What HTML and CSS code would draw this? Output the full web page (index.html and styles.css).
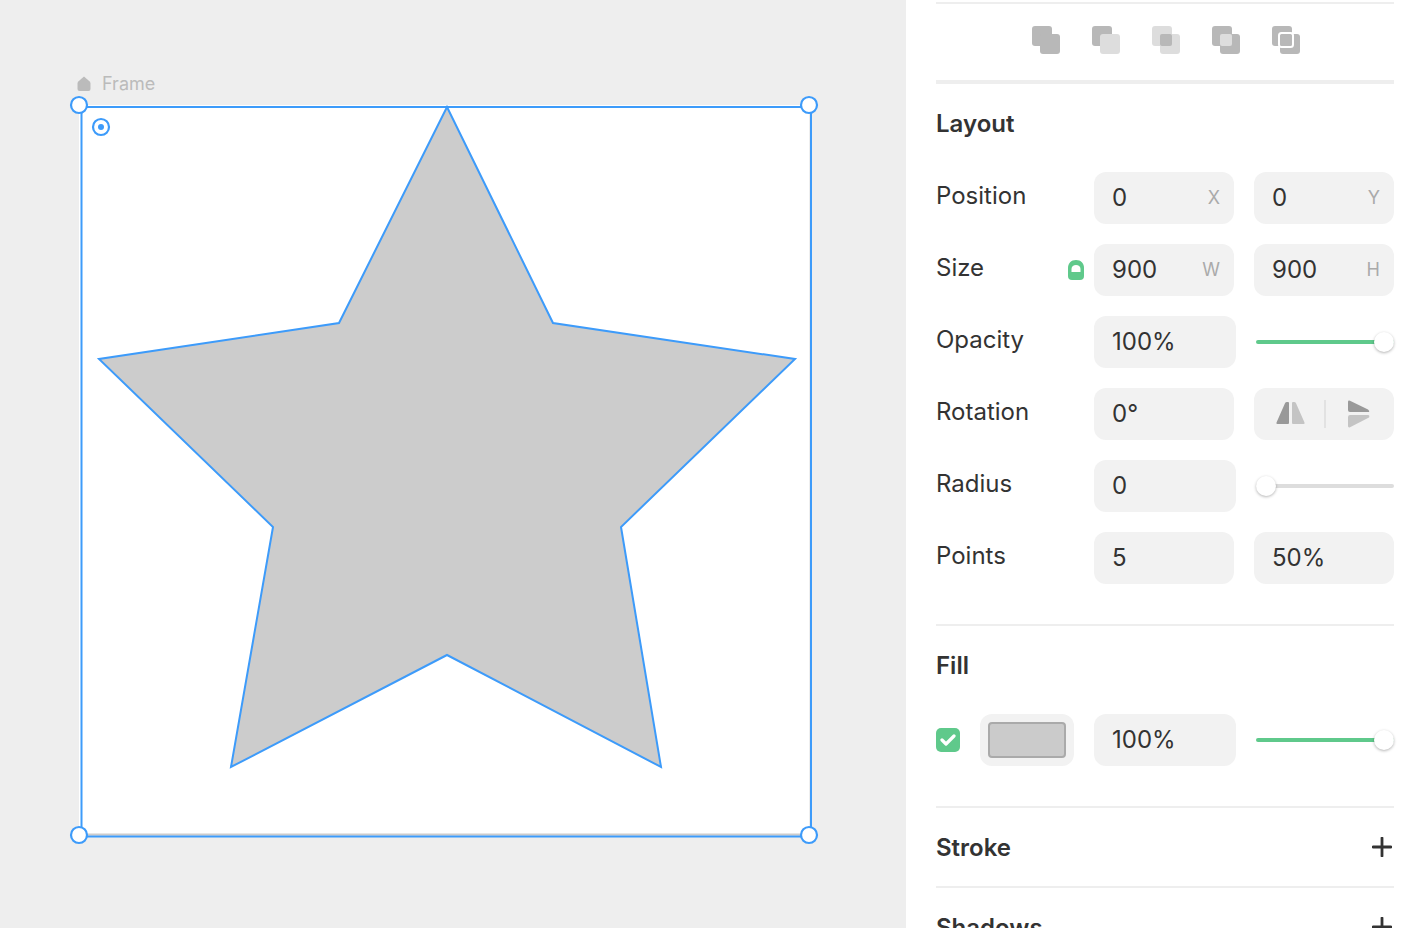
FILE: index.html
```html
<!DOCTYPE html>
<html>
<head>
  <title>Shape editor</title>
  <meta charset='utf-8'/>
  <link rel="stylesheet" href="styles.css">
</head>
<body>
<div class="canvas">
  <div class="frame-label">
    <svg width="14" height="16" viewBox="0 0 14 16"><path d="M7 .5 L1.6 5.2 Q.5 6.2 .5 7.5 V13 Q.5 15 2.5 15 H11.5 Q13.5 15 13.5 13 V7.5 Q13.5 6.2 12.4 5.2 Z" fill="#bbb"/></svg>
    <span>Frame</span>
  </div>
  <svg class="stage" width="906" height="928" viewBox="0 0 906 928">
    <rect x="79" y="105" width="730" height="730" fill="#fff"/>
    <rect x="81" y="833.500" width="729" height="2" fill="#ccc"/>
    <polygon points="447,107 553,323 795,359 621,527 661,767 447,655 231,767 273,527 99,359 339,323" fill="#ccc" stroke="#3d9bfa" stroke-width="2"/>
    <rect x="81.500" y="107" width="729.500" height="729.500" fill="none" stroke="#3d9bfa" stroke-width="2"/>
    <g fill="#fff" stroke="#3d9bfa" stroke-width="2.200">
      <circle cx="79" cy="105" r="8"/>
      <circle cx="809" cy="105" r="8"/>
      <circle cx="79" cy="835" r="8"/>
      <circle cx="809" cy="835" r="8"/>
      <circle cx="101" cy="127" r="8"/>
    </g>
    <circle cx="101" cy="127" r="3" fill="#3d9bfa"/>
  </svg>
</div>

<div class="panel">
  <div class="tools">
    <svg width="28" height="28" viewBox="0 0 28 28"><rect width="20" height="20" rx="3" fill="#b8b8b8"/><rect x="8" y="8" width="20" height="20" rx="3" fill="#b8b8b8"/></svg>
    <svg width="28" height="28" viewBox="0 0 28 28"><rect width="20" height="20" rx="3" fill="#b8b8b8"/><rect x="8" y="8" width="20" height="20" rx="3" fill="#ddd"/></svg>
    <svg width="28" height="28" viewBox="0 0 28 28"><rect width="20" height="20" rx="3" fill="#ddd"/><rect x="8" y="8" width="20" height="20" rx="3" fill="#ddd"/><rect x="8" y="8" width="12" height="12" rx="2" fill="#b8b8b8"/></svg>
    <svg width="28" height="28" viewBox="0 0 28 28"><rect width="20" height="20" rx="3" fill="#b8b8b8"/><rect x="8" y="8" width="20" height="20" rx="3" fill="#b8b8b8"/><rect x="8" y="8" width="12" height="12" rx="2" fill="#ddd"/></svg>
    <svg width="28" height="28" viewBox="0 0 28 28"><rect width="20" height="20" rx="3" fill="#b8b8b8"/><rect x="8" y="8" width="20" height="20" rx="3" fill="#b8b8b8"/><rect x="7" y="7" width="14" height="14" rx="2.500" fill="#b8b8b8" stroke="#fff" stroke-width="2"/></svg>
  </div>

  <div class="section layout">
    <h2>Layout</h2>
    <div class="row">
      <label>Position</label>
      <div class="field">0<i>X</i></div>
      <div class="field">0<i>Y</i></div>
    </div>
    <div class="row">
      <label>Size
        <svg width="16" height="20" viewBox="0 0 16 20"><path d="M8 0 C3 0 0 3.500 0 8 V16 Q0 20 4 20 H12 Q16 20 16 16 V8 C16 3.500 13 0 8 0 Z" fill="#5fc98b"/><path d="M3.500 12 V9 C3.500 6.500 5.500 5 8 5 C10.500 5 12.500 6.500 12.500 9 V12 Z" fill="#fff"/></svg>
      </label>
      <div class="field">900<i>W</i></div>
      <div class="field">900<i>H</i></div>
    </div>
    <div class="row">
      <label>Opacity</label>
      <div class="field wide">100%</div>
      <div class="slider on"><span class="thumb end"></span></div>
    </div>
    <div class="row">
      <label>Rotation</label>
      <div class="field">0°</div>
      <div class="field flips">
        <svg width="30" height="24" viewBox="0 0 30 24"><path d="M9 1.200 Q9.500 0 11 0 H12 Q13 0 13 1 V21 Q13 22 12 22 H1.500 Q0 22 .5 20.500 Z" fill="#999"/><path d="M16 1 Q16 0 17 0 H18 Q19.500 0 20 1.200 L28.500 20.500 Q29 22 27.500 22 H17 Q16 22 16 21 Z" fill="#c4c4c4"/></svg>
        <b></b>
        <svg width="22" height="28" viewBox="0 0 22 28"><path d="M0 2 Q0 0 2 .7 L20 9.500 Q22 11 21 12 H2 Q0 12 0 10 Z" fill="#999"/><path d="M0 17 Q0 15 2 15 H20 Q22 15 21 17.500 L2 27.300 Q0 28 0 26 Z" fill="#c4c4c4"/></svg>
      </div>
    </div>
    <div class="row">
      <label>Radius</label>
      <div class="field wide">0</div>
      <div class="slider"><span class="thumb start"></span></div>
    </div>
    <div class="row">
      <label>Points</label>
      <div class="field">5</div>
      <div class="field">50%</div>
    </div>
  </div>

  <div class="section fill">
    <h2>Fill</h2>
    <div class="fill-row">
      <span class="check"><svg width="16" height="14" viewBox="0 0 16 14"><path d="M2 7 L6 11 L14 3" fill="none" stroke="#fff" stroke-width="3.200" stroke-linecap="round" stroke-linejoin="round"/></svg></span>
      <div class="swatch"><span></span></div>
      <div class="field wide">100%</div>
      <div class="slider on"><span class="thumb end"></span></div>
    </div>
  </div>

  <div class="section bar">
    <h2>Stroke</h2>
    <svg width="20" height="20" viewBox="0 0 20 20"><path d="M10 1 V19 M1 10 H19" stroke="#333" stroke-width="2.800" stroke-linecap="round"/></svg>
  </div>
  <div class="section bar">
    <h2>Shadows</h2>
    <svg width="20" height="20" viewBox="0 0 20 20"><path d="M10 1 V19 M1 10 H19" stroke="#333" stroke-width="2.800" stroke-linecap="round"/></svg>
  </div>
</div>
</body>
</html>
```

FILE: styles.css
```css
html, body { height: 100%; }
body {
  margin: 0;
  display: flex;
  height: 928px;
  overflow: hidden;
  background: #fff;
  font-family: "Inter", "Liberation Sans", sans-serif;
  color: #333;
}

.canvas {
  position: relative;
  width: 906px;
  flex: none;
  background: #eee;
}
.stage { position: absolute; left: 0; top: 0; }
.frame-label {
  position: absolute;
  left: 77px;
  top: 73px;
  display: flex;
  align-items: center;
  gap: 11px;
  font-size: 18px;
  line-height: 22px;
  color: #bbb;
}

.panel {
  flex: 1;
  padding: 0 30px;
  overflow: hidden;
}
.tools {
  margin-top: 2px;
  height: 72px;
  padding: 0 0 4px 2px;
  border-top: 2px solid #eee;
  border-bottom: 4px solid #eee;
  display: flex;
  justify-content: center;
  align-items: center;
  gap: 32px;
}
.tools svg { display: block; }

h2 {
  margin: 0;
  font-size: 24px;
  line-height: 30px;
  font-weight: 600;
  color: #333;
}

.section { border-bottom: 2px solid #eee; }
.layout { padding: 25px 0 40px; }
.layout h2 { margin-bottom: 33px; }

.row {
  display: flex;
  align-items: center;
  height: 52px;
  margin-bottom: 20px;
}
.row:last-child { margin-bottom: 0; }
.row label {
  width: 148px;
  margin-right: 10px;
  font-size: 24px;
  line-height: 30px;
  display: flex;
  justify-content: space-between;
  align-items: center;
  position: relative;
  top: -2px;
}
.row label svg { position: relative; top: 2px; }

.field {
  width: 140px;
  height: 52px;
  box-sizing: border-box;
  padding: 0 14px 2px 18px;
  background: #f2f2f2;
  border-radius: 12px;
  display: flex;
  justify-content: space-between;
  align-items: center;
  font-size: 24px;
}
.field + .field { margin-left: 20px; }
.field i {
  font-style: normal;
  font-size: 18px;
  color: #aaa;
}
.field.wide { width: 142px; }

.flips {
  padding: 0 0 0 22px;
  justify-content: flex-start;
}
.flips b {
  width: 2px;
  height: 28px;
  margin: 0 22px 0 18px;
  background: #e2e2e2;
}

.slider {
  position: relative;
  width: 138px;
  height: 4px;
  margin-left: 20px;
  border-radius: 2px;
  background: #ddd;
}
.slider.on { background: #5fc98b; }
.thumb {
  position: absolute;
  top: -8px;
  width: 20px;
  height: 20px;
  border-radius: 50%;
  background: #fff;
  box-shadow: 0 1px 3px rgba(0,0,0,.3);
}
.thumb.end { right: 0; }
.thumb.start { left: 0; }

.fill { padding: 25px 0 40px; }
.fill-row {
  display: flex;
  align-items: center;
  margin-top: 33px;
}
.check {
  width: 24px;
  height: 24px;
  border-radius: 5px;
  background: #5fc98b;
  display: flex;
  justify-content: center;
  align-items: center;
  margin-right: 20px;
}
.swatch {
  width: 94px;
  height: 52px;
  box-sizing: border-box;
  padding: 8px;
  background: #f2f2f2;
  border-radius: 12px;
  margin-right: 20px;
}
.swatch span {
  display: block;
  height: 100%;
  box-sizing: border-box;
  background: #cbcbcb;
  border: 2px solid #aaa;
  border-radius: 4px;
}

.bar {
  height: 78px;
  display: flex;
  justify-content: space-between;
  align-items: center;
  padding-right: 2px;
}
.bar h2 { padding-top: 2px; }
.bar:last-child { border-bottom: 0; }
```
